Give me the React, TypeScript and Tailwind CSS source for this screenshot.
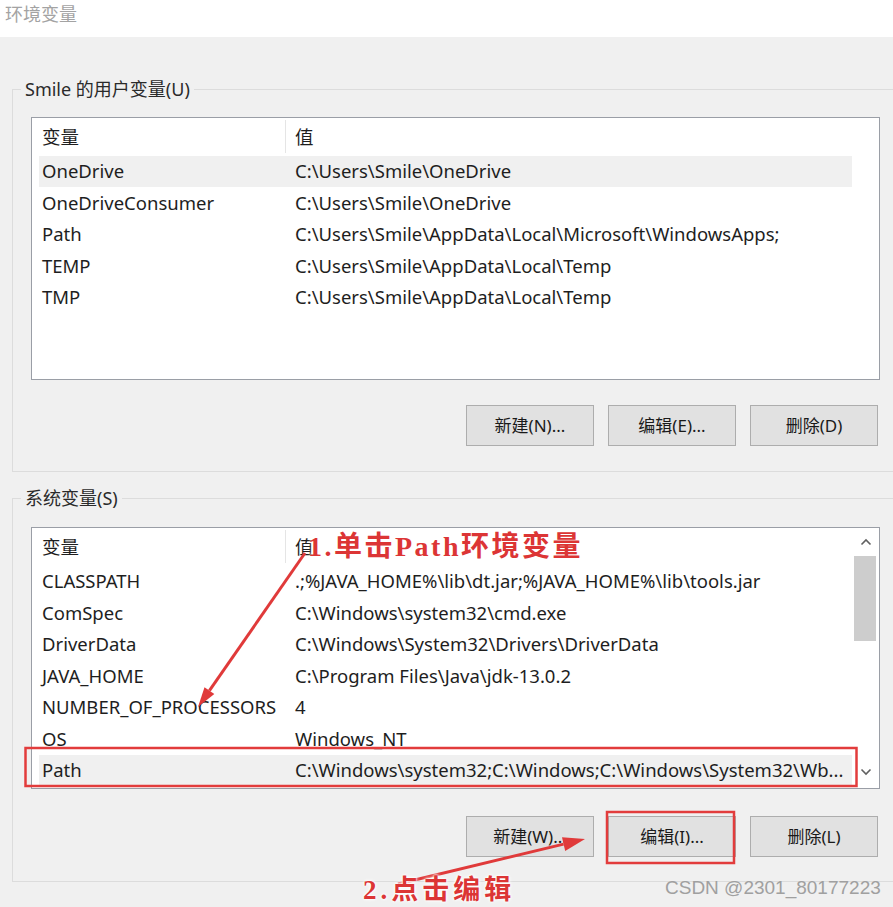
const userVars = [
  ["OneDrive", "C:\\Users\\Smile\\OneDrive"],
  ["OneDriveConsumer", "C:\\Users\\Smile\\OneDrive"],
  ["Path", "C:\\Users\\Smile\\AppData\\Local\\Microsoft\\WindowsApps;"],
  ["TEMP", "C:\\Users\\Smile\\AppData\\Local\\Temp"],
  ["TMP", "C:\\Users\\Smile\\AppData\\Local\\Temp"],
];

const sysVars = [
  ["CLASSPATH", ".;%JAVA_HOME%\\lib\\dt.jar;%JAVA_HOME%\\lib\\tools.jar"],
  ["ComSpec", "C:\\Windows\\system32\\cmd.exe"],
  ["DriverData", "C:\\Windows\\System32\\Drivers\\DriverData"],
  ["JAVA_HOME", "C:\\Program Files\\Java\\jdk-13.0.2"],
  ["NUMBER_OF_PROCESSORS", "4"],
  ["OS", "Windows_NT"],
  ["Path", "C:\\Windows\\system32;C:\\Windows;C:\\Windows\\System32\\Wb..."],
];

function Scrollbar() {
  return (
    <div className="flex w-[26px] flex-col items-center">
      <div className="flex h-[28px] w-full items-center justify-center">
        <svg width="12" height="8" viewBox="0 0 12 8">
          <path d="M1.5 6.5 L6 2 L10.5 6.5" fill="none" stroke="#606060" strokeWidth="1.6" />
        </svg>
      </div>
      <div className="ml-[-2px] h-[85px] w-[22px] bg-[#cdcdcd]" />
      <div className="flex-1" />
      <div className="flex h-[32px] w-full items-center justify-center">
        <svg width="12" height="8" viewBox="0 0 12 8">
          <path d="M1.5 1.5 L6 6 L10.5 1.5" fill="none" stroke="#606060" strokeWidth="1.6" />
        </svg>
      </div>
    </div>
  );
}

function VarList({
  rows,
  selected,
  height,
  scrollbar,
}: {
  rows: string[][];
  selected: number;
  height: string;
  scrollbar?: boolean;
}) {
  return (
    <div className={`flex w-[849px] border border-[#9a9ea6] bg-white ${height}`}>
      <div className="flex w-[821px] flex-col overflow-hidden pl-[7px]">
        <div className="flex h-[37.5px] shrink-0 items-center">
          <div className="w-[246px] pl-[3px]">变量</div>
          <div className="h-[33px] w-px bg-[#e5e5e5]" />
          <div className="pl-[9px]">值</div>
        </div>
        {rows.map(([name, value], i) => (
          <div
            key={name + i}
            className={`flex h-[31.5px] w-[813px] shrink-0 items-center whitespace-nowrap ${
              i === selected ? "bg-[#f0f0f0]" : ""
            }`}
          >
            <div className="w-[247px] pl-[3px]">{name}</div>
            <div className="pl-[9px]">{value}</div>
          </div>
        ))}
      </div>
      {scrollbar && <Scrollbar />}
    </div>
  );
}

function Buttons({ labels }: { labels: string[] }) {
  return (
    <div className="flex w-[849px] justify-end gap-[14px] pr-[2px]">
      {labels.map((l) => (
        <button
          key={l}
          className="h-[41px] w-[128px] border border-[#adadad] bg-[#e1e1e1] text-[17px] text-[#1a1a1a]"
        >
          {l}
        </button>
      ))}
    </div>
  );
}

function Group({
  label,
  children,
  className,
}: {
  label: string;
  children: React.ReactNode;
  className: string;
}) {
  return (
    <div className={`relative ml-[12px] w-[890px] border border-[#dcdcdc] pl-[18px] ${className}`}>
      <span className="absolute -top-[13px] left-[8px] bg-[#f0f0f0] px-[4px] text-[18px] leading-[24px] text-[#2a2a2a]">
        {label}
      </span>
      {children}
    </div>
  );
}

export default function App() {
  const glow = "[text-shadow:0_0_2px_#fff,0_0_3px_#fff,0_0_4px_#fff]";
  return (
    <div className="relative h-[907px] w-[893px] overflow-hidden bg-[#f0f0f0] font-['Noto_Sans','Noto_Sans_CJK_SC',sans-serif] text-[18.5px] text-[#1e1e1e]">
      <div className="h-[37px] bg-white pl-[5px] text-[18px] leading-[28px] text-[#a3a3a3]">环境变量</div>

      <Group label="Smile 的用户变量(U)" className="mt-[52px] pt-[27px] pb-[25px]">
        <VarList rows={userVars} selected={0} height="h-[263px]" />
        <div className="mt-[25px]">
          <Buttons labels={["新建(N)...", "编辑(E)...", "删除(D)"]} />
        </div>
      </Group>

      <Group label="系统变量(S)" className="mt-[26px] pt-[28px] pb-[24px]">
        <VarList rows={sysVars} selected={6} height="h-[262px]" scrollbar />
        <div className="mt-[27px]">
          <Buttons labels={["新建(W)...", "编辑(I)...", "删除(L)"]} />
        </div>
      </Group>

      {/* annotations drawn over the dialog */}
      <svg className="pointer-events-none absolute inset-0" width="893" height="907">
        <rect x="25.5" y="748" width="831" height="38" fill="none" stroke="#e23c3c" strokeWidth="2.5" />
        <rect x="607" y="812" width="127" height="51" fill="none" stroke="#e23c3c" strokeWidth="2.5" />
        <line x1="305" y1="553" x2="209.4" y2="690.6" stroke="#e03a3a" strokeWidth="3" />
        <polygon points="198,707 214.3,694 204.5,687.2" fill="#e03a3a" />
        <line x1="398" y1="884" x2="563.6" y2="844.1" stroke="#e03a3a" strokeWidth="3" />
        <polygon points="585,839 565.2,850.9 562,837.3" fill="#e03a3a" />
      </svg>

      <div
        className={`absolute left-[308px] top-[529px] whitespace-nowrap font-['Liberation_Serif','Noto_Sans_CJK_SC',serif] text-[28px] font-bold leading-[36px] tracking-[2.5px] text-[#dc3535] ${glow}`}
      >
        1.单击Path环境变量
      </div>
      <div
        className={`absolute left-[363px] top-[873px] whitespace-nowrap font-['Liberation_Serif','Noto_Sans_CJK_SC',serif] text-[27px] font-bold leading-[34px] tracking-[4px] text-[#dc3535] ${glow}`}
      >
        2.点击编辑
      </div>
      <div className="absolute left-[665px] top-[876px] whitespace-nowrap font-['Liberation_Sans',sans-serif] text-[19px] leading-[24px] text-[#a0a0a0]">
        CSDN @2301_80177223
      </div>
    </div>
  );
}
